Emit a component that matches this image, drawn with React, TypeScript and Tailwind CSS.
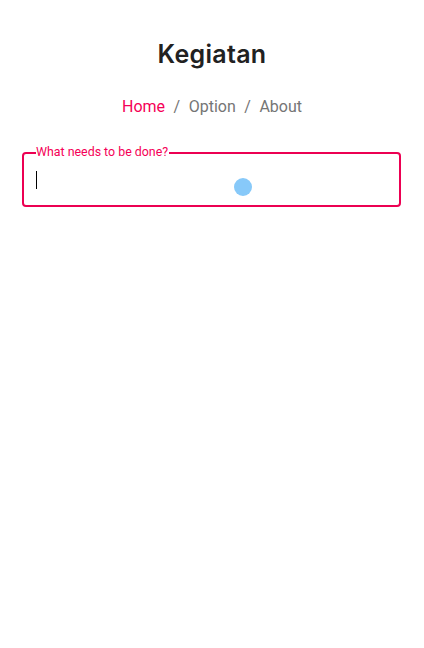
import React from "react";

export default function App() {
  return (
    <div className="min-h-[648px] w-full bg-white" style={{ fontFamily: "Roboto, 'Liberation Sans', sans-serif" }}>
      <div className="flex flex-col items-center pt-[38px]">
        <h1 className="text-[25px] leading-[32px] font-semibold text-[#212121] tracking-[0.3px]" style={{ fontFamily: "Inter, 'Noto Sans', sans-serif" }}>
          Kegiatan
        </h1>
        <nav className="mt-[25px] flex items-center text-[16px] leading-[24px] text-[#757575]">
          <span className="text-[#f50057]">Home</span>
          <span className="mx-[8.5px]">/</span>
          <span>Option</span>
          <span className="mx-[8.5px]">/</span>
          <span>About</span>
        </nav>
      </div>
      <div className="mx-[22px] mt-[33px] relative h-[55px] w-[379px] rounded-[4px] border-2 border-[#ec0052]">
        <span className="absolute left-[12px] top-[-9px] bg-white pr-[1px] text-[12.4px] leading-[14px] text-[#f50057]">
          What needs to be done?
        </span>
        <div className="absolute left-[12px] top-[17px] h-[18px] w-[1px] bg-black" />
        <div className="absolute left-[210px] top-[24px] h-[18px] w-[18px] rounded-full bg-[#87c9f9]" />
      </div>
    </div>
  );
}
